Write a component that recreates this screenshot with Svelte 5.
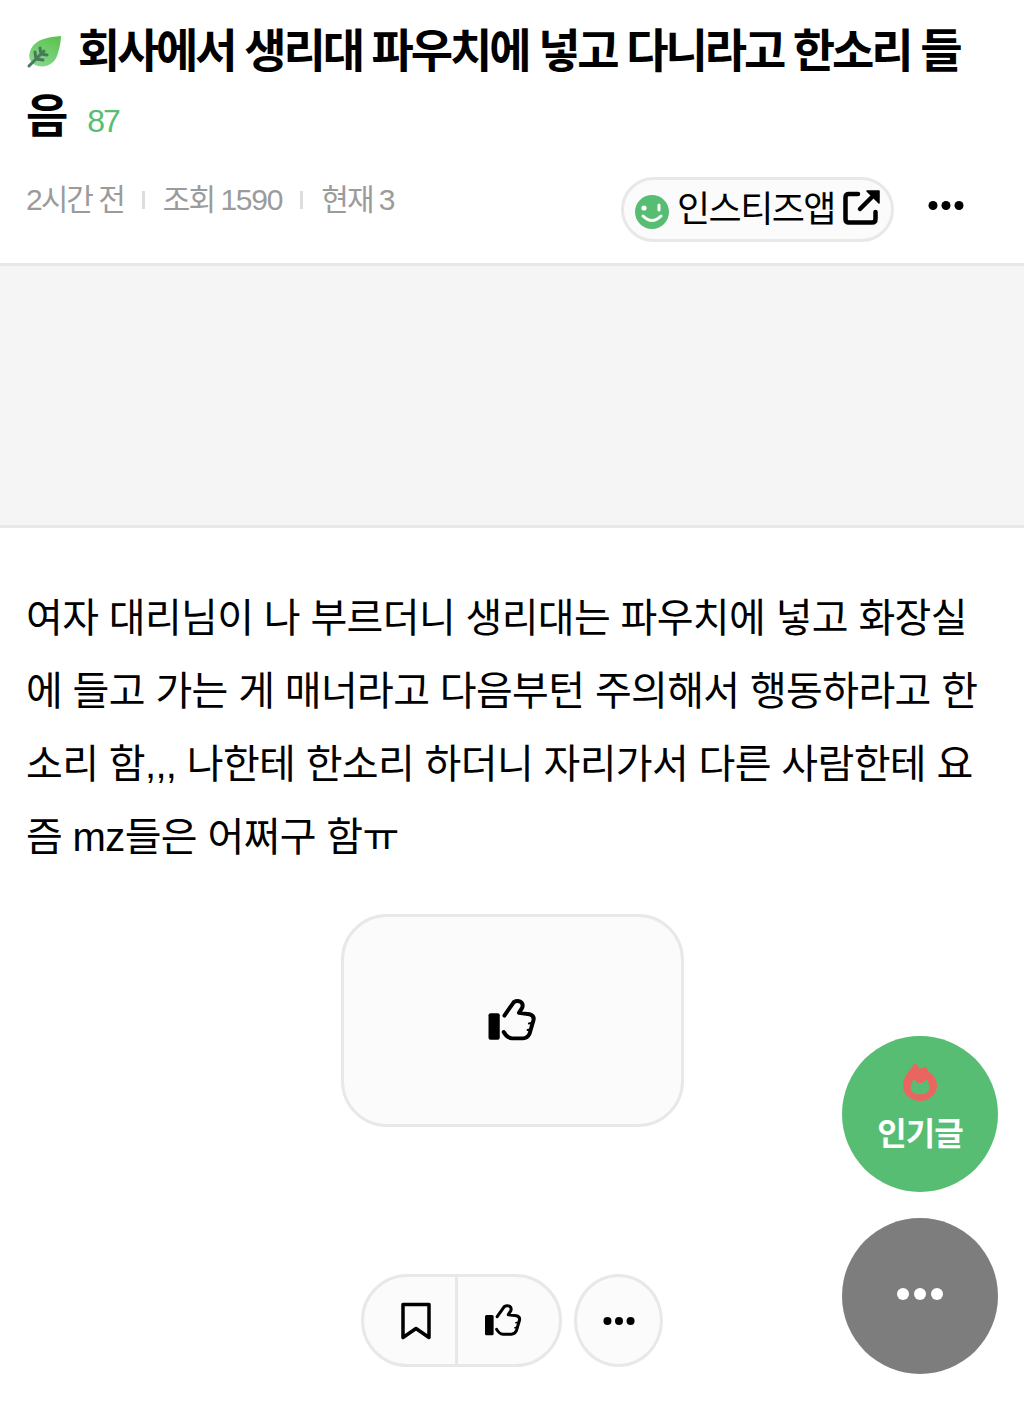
<script>
    const title = '회사에서 생리대 파우치에 넣고 다니라고 한소리 들음';
    const body = '여자 대리님이 나 부르더니 생리대는 파우치에 넣고 화장실에 들고 가는 게 매너라고 다음부턴 주의해서 행동하라고 한소리 함,,, 나한테 한소리 하더니 자리가서 다른 사람한테 요즘 mz들은 어쩌구 함ㅠ';
</script>

{#snippet thumb(w, h)}
    <svg width={w} height={h} viewBox="0 0 150 130" fill="none">
        <rect x="4" y="43" width="34" height="80" rx="6" fill="#000" />
        <path d="M52 50 L80 10 Q90 4 100 8 Q110 14 106 26 L96 42 L128 46 Q143 50 140 64 L128 105 Q122 118 108 119 L75 119 Q60 118 50 100" stroke="#000" stroke-width="12" stroke-linecap="round" stroke-linejoin="round" />
        <path d="M137 72 L126 74 M131 92 L122 94" stroke="#000" stroke-width="6" stroke-linecap="round" />
    </svg>
{/snippet}

{#snippet dots(w)}
    <svg width={w} height={w / 4} viewBox="0 0 36 9" fill="#000">
        <circle cx="5" cy="4.5" r="4.5" />
        <circle cx="18" cy="4.5" r="4.5" />
        <circle cx="31" cy="4.5" r="4.5" />
    </svg>
{/snippet}

<div class="page">
    <header class="head">
        <h1 class="title">
            <svg class="leaf" width="36" height="34" viewBox="0 0 36 34">
                <defs>
                    <linearGradient id="leafFill" x1="0.8" y1="0" x2="0.3" y2="1">
                        <stop offset="0" stop-color="#5cc24f" />
                        <stop offset="1" stop-color="#86d98a" />
                    </linearGradient>
                </defs>
                <path d="M35 1 C22 2 10 4 5 14 C1 22 4 29 12 31 C22 33 30 27 32 18 C34 11 35 6 35 1Z" fill="url(#leafFill)" />
                <path d="M3 31 L18 16 M10 24 L9 17 M10 24 L17 25 M15 19 L14 13 M15 19 L21 20" stroke="#47795a" stroke-width="3" stroke-linecap="round" fill="none" />
            </svg>
            {title}<span class="count">87</span>
        </h1>
        <div class="meta-row">
            <div class="meta">
                <span>2시간 전</span><i></i><span>조회 <span class="num">1590</span></span><i></i><span>현재 3</span>
            </div>
            <div class="actions">
                <div class="app-pill">
                    <svg class="smile" width="34" height="34" viewBox="0 0 34 34">
                        <circle cx="17" cy="17" r="17" fill="#57bd72" />
                        <circle cx="9" cy="13" r="2.6" fill="#fff" />
                        <path d="M24 10 V15" stroke="#fff" stroke-width="3" stroke-linecap="round" />
                        <path d="M8 21 Q17 30 26 21" stroke="#fff" stroke-width="3" stroke-linecap="round" fill="none" />
                    </svg>
                    <span class="app-name">인스티즈앱</span>
                    <svg class="ext" width="38" height="38" viewBox="0 0 38 38" fill="none" stroke="#000" stroke-linecap="round" stroke-linejoin="round">
                        <path d="M15 6 H6 Q2.500 6 2.500 9.500 V31 Q2.500 34.500 6 34.500 H29 Q32.500 34.500 32.500 31 V24" stroke-width="4.500" />
                        <path d="M17 21 L32 6" stroke-width="4.500" />
                        <path d="M24 3 H36 V15 Z" fill="#000" stroke-width="1.500" />
                    </svg>
                </div>
                <button class="more">{@render dots(36)}</button>
            </div>
        </div>
    </header>

    <div class="ad"></div>

    <article class="body">{body}</article>

    <div class="like-wrap">
        <div class="like-box">{@render thumb(50, 43)}</div>
    </div>

    <div class="bar">
        <div class="bar-pair">
            <div class="bar-cell mark">
                <svg width="30" height="38" viewBox="0 0 30 38" fill="none">
                    <path d="M2 2.500 H28 V35.500 L15 26.500 L2 35.500 Z" stroke="#000" stroke-width="3.500" stroke-linejoin="round" />
                </svg>
            </div>
            <div class="bar-cell up">{@render thumb(38, 33)}</div>
        </div>
        <div class="bar-round">{@render dots(32)}</div>
    </div>

    <button class="fab hot">
        <svg width="36" height="40" viewBox="0 0 38 40">
            <path d="M14 0 L19 6 L26 4 C26 8 28 9 32 12 C36 16 37 21 37 25 C36 34 28 40 19 40 C9 40 1 33 1 24 C1 16 7 8 14 0Z" fill="#ea6560" />
            <path d="M12 17 L17 21 L21 21 L26 17 C28 21 30 24 29 27 C28 31 24 33 19 33 C14 33 9 31 9 26 C9 23 11 20 12 17Z" fill="#57bd72" />
        </svg>
        <span>인기글</span>
    </button>
    <button class="fab gray">
        <svg width="46" height="12" viewBox="0 0 46 12" fill="#fff">
            <circle cx="6" cy="6" r="6" /><circle cx="23" cy="6" r="6" /><circle cx="40" cy="6" r="6" />
        </svg>
    </button>
</div>

<style>
    :global(body) {
        background: #fff;
    }

    .page {
        position: relative;
        height: 1410px;
        overflow: hidden;
        font-family: "Liberation Sans", "Noto Sans CJK KR", sans-serif;
        color: #000;
    }

    button {
        border: 0;
        padding: 0;
        background: none;
    }

    .head {
        padding: 19px 26px 0;
        height: 263px;
        box-sizing: border-box;
    }

    .title {
        margin: 0;
        font-size: 46px;
        font-weight: 700;
        line-height: 65px;
        letter-spacing: -3.1px;
    }

    .leaf {
        margin-right: 6px;
        vertical-align: -2px;
    }

    .count {
        margin-left: 22px;
        font-size: 32px;
        font-weight: 400;
        color: #57bd72;
        letter-spacing: -2px;
    }

    .meta-row {
        display: flex;
        justify-content: space-between;
        align-items: flex-start;
        margin-top: 23px;
    }

    .meta {
        display: flex;
        align-items: center;
        gap: 18px;
        font-size: 30px;
        line-height: 40px;
        color: #9b9b9b;
        letter-spacing: -2px;
        margin-top: 3px;
    }

    .num {
        letter-spacing: -1.2px;
    }

    .meta i {
        width: 3px;
        height: 18px;
        background: #ddd;
    }

    .actions {
        display: flex;
        align-items: center;
        gap: 34px;
        margin-right: 34px;
    }

    .app-pill {
        display: flex;
        align-items: center;
        gap: 8px;
        height: 65px;
        box-sizing: border-box;
        padding: 0 10px 0 11px;
        border: 3px solid #e8e8e8;
        border-radius: 33px;
        background: #fbfbfb;
        font-size: 36px;
        letter-spacing: -1.5px;
    }

    .smile {
        margin-top: 5px;
    }

    .app-name {
        margin-bottom: 8px;
    }

    .ext {
        margin-bottom: 6px;
    }

    .more {
        display: flex;
        margin-bottom: 8px;
    }

    .ad {
        height: 265px;
        box-sizing: border-box;
        border-top: 3px solid #e8e8e8;
        border-bottom: 3px solid #e8e8e8;
        background: #f5f5f5;
    }

    .body {
        padding: 54px 30px 0 26px;
        font-size: 40px;
        line-height: 73px;
        letter-spacing: -0.65px;
        word-break: break-all;
    }

    .like-wrap {
        display: flex;
        justify-content: center;
        margin-top: 40px;
    }

    .like-box {
        display: flex;
        align-items: center;
        justify-content: center;
        width: 343px;
        height: 213px;
        box-sizing: border-box;
        border: 3px solid #e8e8e8;
        border-radius: 46px;
        background: #fbfbfb;
    }

    .bar {
        display: flex;
        justify-content: center;
        gap: 12px;
        margin-top: 147px;
    }

    .bar-pair {
        display: flex;
        width: 201px;
        height: 93px;
        box-sizing: border-box;
        border: 3px solid #e8e8e8;
        border-radius: 47px;
        background: #fbfbfb;
    }

    .bar-cell {
        display: flex;
        align-items: center;
        justify-content: center;
    }

    .mark {
        width: 94px;
        box-sizing: border-box;
        padding-left: 12px;
        border-right: 3px solid #e8e8e8;
    }

    .up {
        flex: 1;
        padding-right: 12px;
    }

    .bar-round {
        display: flex;
        align-items: center;
        justify-content: center;
        width: 89px;
        height: 93px;
        box-sizing: border-box;
        border: 3px solid #e8e8e8;
        border-radius: 50%;
        background: #fbfbfb;
    }

    .fab {
        position: absolute;
        left: 842px;
        width: 156px;
        height: 156px;
        border-radius: 50%;
        display: flex;
        flex-direction: column;
        align-items: center;
        justify-content: center;
    }

    .hot {
        top: 1036px;
        gap: 10px;
        padding-bottom: 10px;
        background: #57bd72;
        color: #fff;
        font-family: inherit;
        font-size: 32px;
        font-weight: 700;
        line-height: 44px;
        letter-spacing: -1px;
    }

    .gray {
        top: 1218px;
        padding-bottom: 4px;
        background: #7d7d7d;
    }
</style>
